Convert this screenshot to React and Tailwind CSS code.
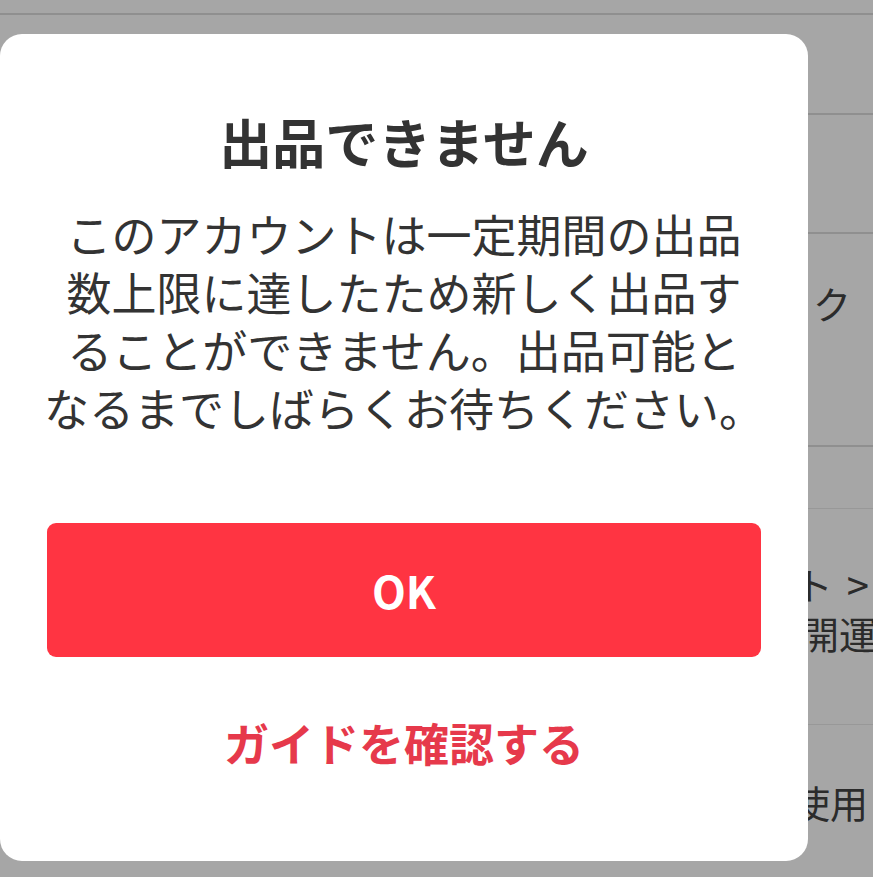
import React from "react";

const jp = { fontFamily: '"Noto Sans CJK JP", "Noto Sans", sans-serif' };

// rows of the page that sits behind the dialog (dimmed)
function BackgroundList() {
  return (
    <div className="flex flex-col bg-[#a6a6a6] text-[#2b2b2b] text-[38px] leading-none" style={jp}>
      <div className="h-[15px] border-b-2 border-[#8f8f8f]" />
      <div className="h-[100px] border-b-2 border-[#8f8f8f]" />
      <div className="h-[119px] border-b-2 border-[#8f8f8f]" />
      <div className="h-[213px] border-b-2 border-[#8f8f8f] flex items-start justify-end pr-[22px] pt-[50px] overflow-hidden whitespace-nowrap">
        ク
      </div>
      <div className="h-[62px] border-b border-[#989898]" />
      <div className="h-[216px] border-b border-[#989898] flex flex-col items-end overflow-hidden whitespace-nowrap pt-[55px]">
        <div className="pr-[4px] flex items-center gap-[14px]">
          <span>ト</span>
          <span className="text-[40px]">&gt;</span>
        </div>
        <div className="mt-[10px] -mr-[4px]">開運</div>
      </div>
      <div className="h-[154px] flex items-start justify-end pr-[5px] pt-[58px] overflow-hidden whitespace-nowrap">
        使用
      </div>
    </div>
  );
}

export default function App() {
  return (
    <div className="relative w-[873px] h-[877px] overflow-hidden bg-[#a6a6a6]">
      <BackgroundList />

      {/* Dialog */}
      <div
        className="absolute left-0 top-[34px] w-[808px] h-[827px] bg-white rounded-[22px] flex flex-col items-center pt-[76px]"
        style={jp}
      >
        <h1 className="text-[53px] leading-[62px] font-bold text-[#333333]">
          出品できません
        </h1>

        <p className="mt-[33px] text-center text-[45px] leading-[58px] text-[#333333] whitespace-nowrap">
          このアカウントは一定期間の出品
          <br />
          数上限に達したため新しく出品す
          <br />
          ることができません。出品可能と
          <br />
          なるまでしばらくお待ちください。
        </p>

        <button className="mt-[86px] w-[714px] h-[134px] rounded-[9px] bg-[#ff3442] text-white text-[44px] font-bold flex items-center justify-center">
          OK
        </button>

        <button className="mt-[58px] text-[45px] leading-[56px] font-bold text-[#e6394b]">
          ガイドを確認する
        </button>
      </div>
    </div>
  );
}
